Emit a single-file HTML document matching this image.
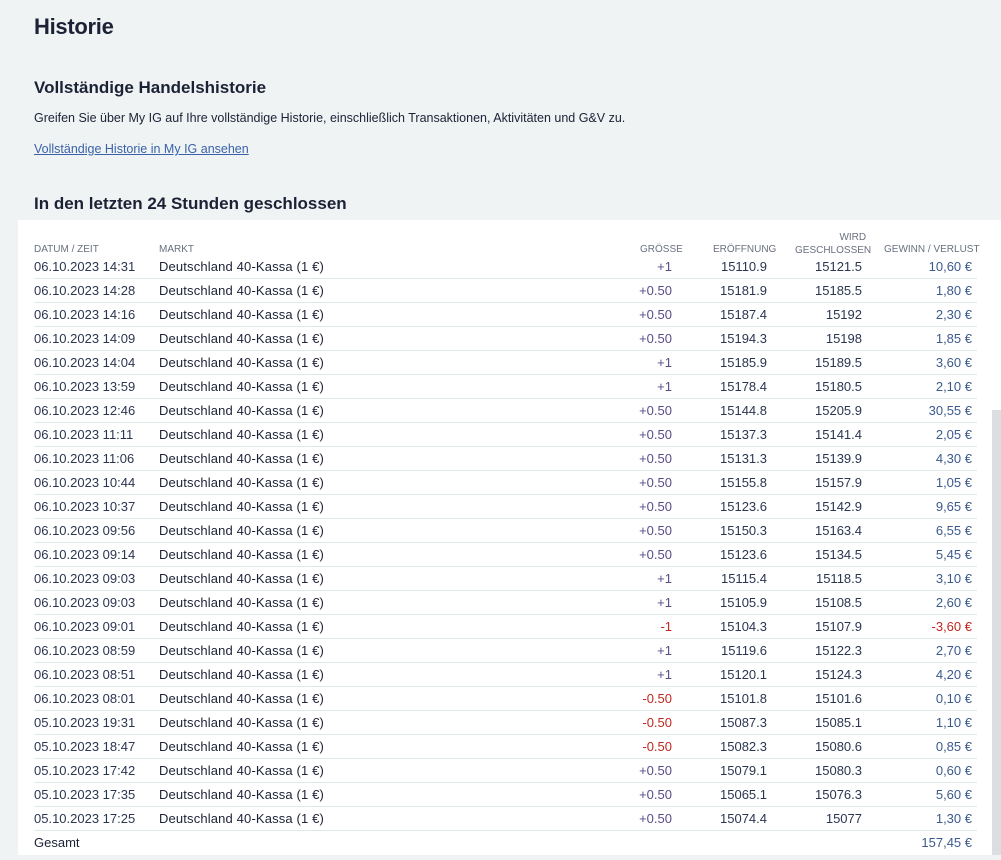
<!DOCTYPE html>
<html><head><meta charset="utf-8"><style>
body{margin:0;background:#eff3f4;font-family:"Liberation Sans",sans-serif;color:#1c2236;width:1001px;height:860px;overflow:hidden;position:relative}
.a{position:absolute;white-space:nowrap}
h1{position:absolute;left:34px;top:14px;margin:0;font-size:22px;font-weight:bold;letter-spacing:-0.3px}
.panel{position:absolute;left:18px;top:220px;width:983px;height:635px;background:#fff}
.sb{position:absolute;left:992px;top:410px;width:9px;height:445px;background:#dcdfe2}
.row{position:absolute;left:34px;width:943px;height:23px;line-height:24px;border-bottom:1px solid #e1e8ea;font-size:13px}
.row span{position:absolute;top:0}
.d{left:0;color:#2a3550}.m{left:125px;letter-spacing:0.15px}
.s{right:305px;color:#5a4c8c}.o{right:210px;color:#2a3550}.c{right:115px;color:#2a3550}.p{right:5px;color:#3b5a8e}
.neg{color:#c0281e!important}
.hd{position:absolute;font-size:10px;color:#6a7080;white-space:nowrap}
</style></head><body>
<h1>Historie</h1>
<div class="a" style="left:34px;top:78px;font-size:17px;font-weight:bold">Vollständige Handelshistorie</div>
<div class="a" style="left:34px;top:111px;font-size:12.5px">Greifen Sie über My IG auf Ihre vollständige Historie, einschließlich Transaktionen, Aktivitäten und G&amp;V zu.</div>
<div class="a" style="left:34px;top:142px;font-size:12.5px;color:#3a62a8;text-decoration:underline">Vollständige Historie in My IG ansehen</div>
<div class="a" style="left:34px;top:194px;font-size:17px;font-weight:bold">In den letzten 24 Stunden geschlossen</div>
<div class="panel"></div>
<div class="sb"></div>
<div class="hd" style="left:34px;top:244px">DATUM / ZEIT</div>
<div class="hd" style="left:159px;top:244px">MARKT</div>
<div class="hd" style="left:640px;top:244px">GRÖSSE</div>
<div class="hd" style="left:713px;top:244px">ERÖFFNUNG</div>
<div class="hd" style="left:795px;top:231px;line-height:13px">&nbsp;&nbsp;&nbsp;&nbsp;&nbsp;&nbsp;&nbsp;&nbsp;&nbsp;&nbsp;&nbsp;&nbsp;&nbsp;&nbsp;&nbsp;&nbsp;WIRD<br>GESCHLOSSEN</div>
<div class="hd" style="left:884px;top:244px">GEWINN / VERLUST</div>
<div id="rows"></div>
<script>
var d=[["06.10.2023 14:31","+1","15110.9","15121.5","10,60 €"],["06.10.2023 14:28","+0.50","15181.9","15185.5","1,80 €"],["06.10.2023 14:16","+0.50","15187.4","15192","2,30 €"],["06.10.2023 14:09","+0.50","15194.3","15198","1,85 €"],["06.10.2023 14:04","+1","15185.9","15189.5","3,60 €"],["06.10.2023 13:59","+1","15178.4","15180.5","2,10 €"],["06.10.2023 12:46","+0.50","15144.8","15205.9","30,55 €"],["06.10.2023 11:11","+0.50","15137.3","15141.4","2,05 €"],["06.10.2023 11:06","+0.50","15131.3","15139.9","4,30 €"],["06.10.2023 10:44","+0.50","15155.8","15157.9","1,05 €"],["06.10.2023 10:37","+0.50","15123.6","15142.9","9,65 €"],["06.10.2023 09:56","+0.50","15150.3","15163.4","6,55 €"],["06.10.2023 09:14","+0.50","15123.6","15134.5","5,45 €"],["06.10.2023 09:03","+1","15115.4","15118.5","3,10 €"],["06.10.2023 09:03","+1","15105.9","15108.5","2,60 €"],["06.10.2023 09:01","-1","15104.3","15107.9","-3,60 €"],["06.10.2023 08:59","+1","15119.6","15122.3","2,70 €"],["06.10.2023 08:51","+1","15120.1","15124.3","4,20 €"],["06.10.2023 08:01","-0.50","15101.8","15101.6","0,10 €"],["05.10.2023 19:31","-0.50","15087.3","15085.1","1,10 €"],["05.10.2023 18:47","-0.50","15082.3","15080.6","0,85 €"],["05.10.2023 17:42","+0.50","15079.1","15080.3","0,60 €"],["05.10.2023 17:35","+0.50","15065.1","15076.3","5,60 €"],["05.10.2023 17:25","+0.50","15074.4","15077","1,30 €"]];
var h="";d.forEach(function(r,i){var t=255+i*24;
h+='<div class="row" style="top:'+t+'px"><span class="d">'+r[0]+'</span><span class="m">Deutschland 40-Kassa (1 €)</span><span class="s'+(r[1][0]=="-"?" neg":"")+'">'+r[1]+'</span><span class="o">'+r[2]+'</span><span class="c">'+r[3]+'</span><span class="p'+(r[4][0]=="-"?" neg":"")+'">'+r[4]+'</span></div>';});
h+='<div class="row" style="top:831px;border-bottom:none"><span class="d" style="color:#1c2236">Gesamt</span><span class="p">157,45 €</span></div>';
document.getElementById("rows").innerHTML=h;
</script>
</body></html>
